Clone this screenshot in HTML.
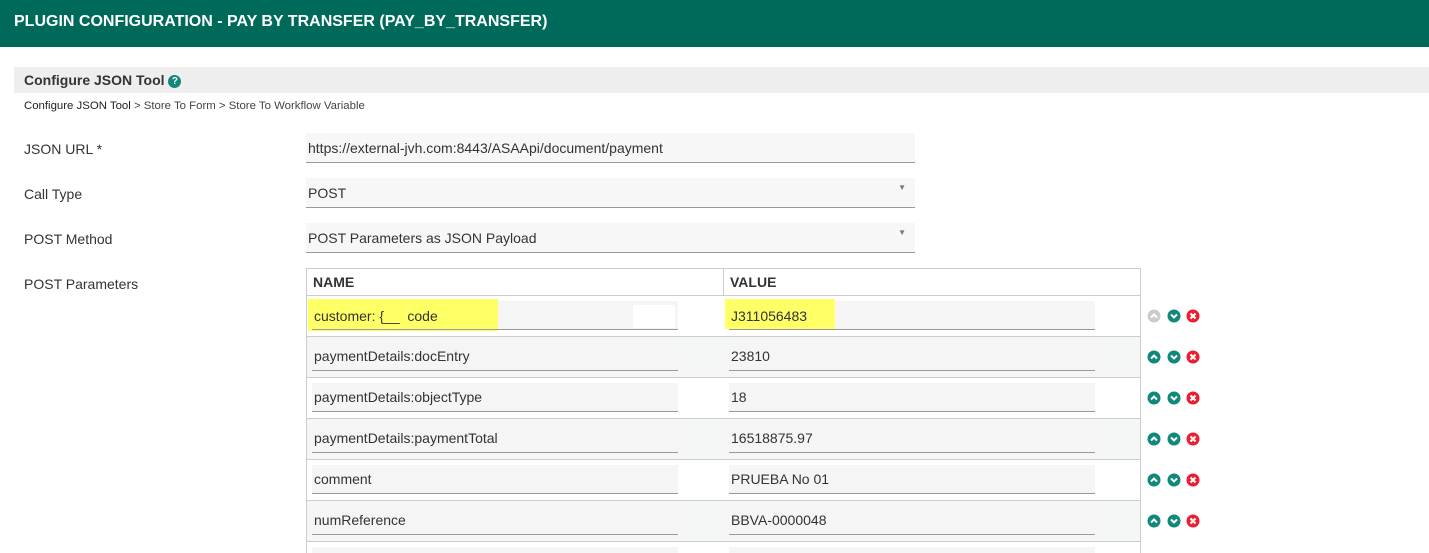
<!DOCTYPE html>
<html><head><style>
*{box-sizing:border-box;margin:0;padding:0}
html,body{width:1429px;height:553px;overflow:hidden}
body{background:#fff;font-family:"Liberation Sans",Arial,sans-serif;color:#333;position:relative}
.a{position:absolute}
.hdr{left:0;top:0;width:1429px;height:47px;background:#006a5a;color:#fff;font-weight:bold;font-size:16px;padding:13px 0 0 14px}
.bar{left:14px;top:67px;width:1415px;height:26px;background:#eee;font-weight:bold;font-size:14px;padding:5px 0 0 10px;color:#333}
.q{display:inline-block;width:13px;height:13px;border-radius:50%;background:#11897a;color:#fff;font-size:10px;text-align:center;line-height:13px;vertical-align:1px}
.crumb{left:24px;top:100px;font-size:11.4px;color:#444}
.lbl{left:24px;font-size:14px;color:#333}
.fld{left:306px;width:609px;height:30px;background:#f7f7f7;border-bottom:1px solid #999;font-size:14px;padding:7px 0 0 2px}
.arr{position:absolute;right:9px;top:5px;font-size:8px;color:#777}
.tbl{left:306px;top:268px;width:835px;height:285px;border:1px solid #ccc;border-bottom:none}
.th{font-weight:bold;font-size:14px;top:274px}
.row{left:307px;width:833px;height:41px;border-top:1px solid #ccc}
.in{position:absolute;height:29px;background:#f5f5f5;border-bottom:1px solid #999;font-size:14px;padding:6px 0 0 2px;top:5px}
</style></head><body>
<div class="a hdr">PLUGIN CONFIGURATION - PAY BY TRANSFER (PAY_BY_TRANSFER)</div>
<div class="a bar">Configure JSON Tool <span class="q">?</span></div>
<div class="a crumb"><span style="color:#222">Configure JSON Tool</span> &gt; Store To Form &gt; Store To Workflow Variable</div>
<div class="a lbl" style="top:141px">JSON URL *</div>
<div class="a lbl" style="top:186px">Call Type</div>
<div class="a lbl" style="top:231px">POST Method</div>
<div class="a lbl" style="top:276px">POST Parameters</div>
<div class="a fld" style="top:133px">https://external-jvh.com:8443/ASAApi/document/payment</div>
<div class="a fld" style="top:178px">POST<span class="arr">▼</span></div>
<div class="a fld" style="top:223px">POST Parameters as JSON Payload<span class="arr">▼</span></div>
<div class="a tbl"></div>
<div class="a" style="left:723px;top:268px;width:1px;height:285px;background:#ccc"></div>
<div class="a th" style="left:313px">NAME</div>
<div class="a th" style="left:730px">VALUE</div>

<div class="a row" style="top:295px;background:#fff">
 <div class="in" style="left:5px;width:366px;background:#f5f5f5"></div>
 <div class="a" style="left:1px;top:3px;width:190px;height:32px;background:#ffff66"></div>
 <div class="a" style="left:326px;top:9px;width:42px;height:23px;background:#fff"></div>
 <div class="a" style="left:5px;top:33px;width:366px;height:1px;background:#999"></div>
 <div class="a" style="left:7px;top:12px;font-size:14px">customer: {__&nbsp; code</div>
 <div class="in" style="left:422px;width:366px"></div>
 <div class="a" style="left:418px;top:3px;width:110px;height:30px;background:#ffff66"></div>
 <div class="a" style="left:424px;top:12px;font-size:14px">J311056483</div>
</div>
<div class="a row" style="top:336px;background:#f5f7f7"><div class="in" style="left:5px;width:366px">paymentDetails:docEntry</div><div class="in" style="left:422px;width:366px">23810</div></div>
<div class="a row" style="top:377px;background:#fff"><div class="in" style="left:5px;width:366px">paymentDetails:objectType</div><div class="in" style="left:422px;width:366px">18</div></div>
<div class="a row" style="top:418px;background:#f5f7f7"><div class="in" style="left:5px;width:366px">paymentDetails:paymentTotal</div><div class="in" style="left:422px;width:366px">16518875.97</div></div>
<div class="a row" style="top:459px;background:#fff"><div class="in" style="left:5px;width:366px">comment</div><div class="in" style="left:422px;width:366px">PRUEBA No 01</div></div>
<div class="a row" style="top:500px;background:#f5f7f7"><div class="in" style="left:5px;width:366px">numReference</div><div class="in" style="left:422px;width:366px">BBVA-0000048</div></div>
<div class="a row" style="top:541px;height:12px;overflow:hidden;background:#fff"><div class="in" style="left:5px;width:366px;height:7px"></div><div class="in" style="left:422px;width:366px;height:7px"></div></div>

<div id="icons"></div>
<script>
var h='';[316,357,398,439,480,521].forEach(function(y,i){
var up=i==0?'#ccc':'#11897a';
h+='<div class="a" style="left:1147px;top:'+(y-7)+'px"><svg width="60" height="14"><circle cx="7" cy="7" r="6.5" fill="'+up+'"/><path d="M4 8.5 L7 5.5 L10 8.5" stroke="#fff" stroke-width="2" fill="none"/><circle cx="27" cy="7" r="6.5" fill="#11897a"/><path d="M24 5.5 L27 8.5 L30 5.5" stroke="#fff" stroke-width="2" fill="none"/><circle cx="46" cy="7" r="6.5" fill="#ee1c2e"/><path d="M43.5 4.5 L48.5 9.5 M48.5 4.5 L43.5 9.5" stroke="#fff" stroke-width="2.2"/></svg></div>';});
document.getElementById('icons').innerHTML=h;
</script>
</body></html>
